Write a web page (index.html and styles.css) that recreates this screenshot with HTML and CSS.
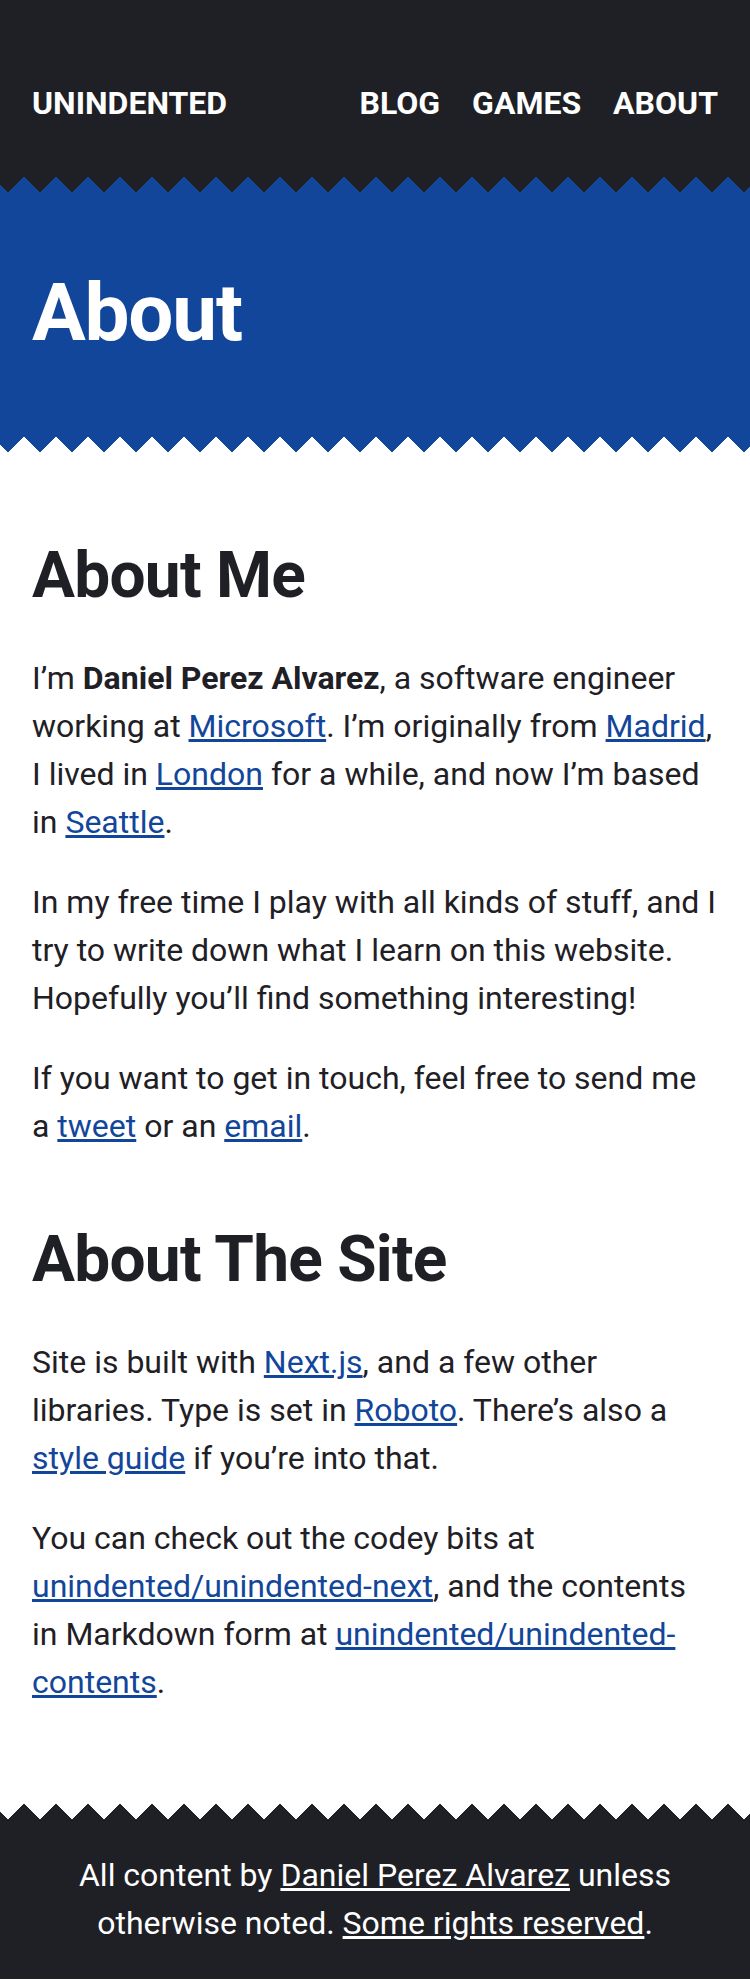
FILE: index.html
```html
<!DOCTYPE html>
<html lang="en">
<head>
<meta charset="utf-8">
<title>About - Unindented</title>
<link rel="stylesheet" href="styles.css">
</head>
<body>
<header class="site-header">
  <a class="logo" href="#">UNINDENTED</a>
  <nav class="nav">
    <a href="#">BLOG</a>
    <a href="#">GAMES</a>
    <a href="#">ABOUT</a>
  </nav>
</header>
<div class="zigzag zigzag-dark-blue"></div>
<section class="hero">
  <h1 class="hero-title">About</h1>
</section>
<div class="zigzag zigzag-blue-white"></div>
<main class="content">
  <h2 class="section-title">About Me</h2>
  <p>I’m <strong>Daniel Perez Alvarez</strong>, a software engineer working at <a href="#">Microsoft</a>. I’m originally from <a href="#">Madrid</a>, I lived in <a href="#">London</a> for a while, and now I’m based in <a href="#">Seattle</a>.</p>
  <p>In my free time I play with all kinds of stuff, and I try to write down what I learn on this website. Hopefully you’ll find something interesting!</p>
  <p>If you want to get in touch, feel free to send me a <a href="#">tweet</a> or an <a href="#">email</a>.</p>
  <h2 class="section-title section-title-next">About The Site</h2>
  <p>Site is built with <a href="#">Next.js</a>, and a few other libraries. Type is set in <a href="#">Roboto</a>. There’s also a <a href="#">style guide</a> if you’re into that.</p>
  <p>You can check out the codey bits at <a href="#">unindented/unindented-next</a>, and the contents in Markdown form at <a href="#">unindented/unindented-contents</a>.</p>
</main>
<div class="zigzag zigzag-white-dark"></div>
<footer class="site-footer">
  <p>All content by <a href="#">Daniel Perez Alvarez</a> unless otherwise noted. <a href="#">Some rights reserved</a>.</p>
</footer>
</body>
</html>
```
FILE: styles.css
```css
html, body {
  margin: 0;
  padding: 0;
}
body {
  font-family: Roboto, "Liberation Sans", sans-serif;
  color: #1f2025;
  background: #ffffff;
}

.site-header {
  background: #1f2025;
  display: flex;
  justify-content: space-between;
  align-items: flex-start;
  padding: 87px 32px 57px;
}
.logo, .nav a {
  color: #ffffff;
  text-decoration: none;
  font-weight: 700;
  font-size: 32px;
  line-height: 32px;
}
.nav {
  display: flex;
  gap: 32px;
}

.zigzag {
  height: 16px;
  background-size: 32px 16px;
  background-repeat: repeat-x;
  background-position: 24px 0;
}
.zigzag-dark-blue {
  background-color: #12469a;
  background-image: conic-gradient(from -45deg at 50% 100%, #1f2025 0deg 90deg, transparent 90deg 360deg);
}
.zigzag-blue-white {
  background-color: #ffffff;
  background-image: conic-gradient(from -45deg at 50% 100%, #12469a 0deg 90deg, transparent 90deg 360deg);
}
.zigzag-white-dark {
  background-color: #1f2025;
  background-image: conic-gradient(from -45deg at 50% 100%, #ffffff 0deg 90deg, transparent 90deg 360deg);
}

.hero {
  background: #12469a;
  padding: 79px 32px 81px;
}
.hero-title {
  margin: 0;
  color: #ffffff;
  font-size: 80px;
  line-height: 84px;
  font-weight: 700;
  letter-spacing: -0.015em;
}

.content {
  padding: 84px 32px 97px;
  font-size: 32px;
  line-height: 48px;
}
.section-title {
  margin: 0 0 38px;
  font-size: 64px;
  line-height: 80px;
  font-weight: 700;
  letter-spacing: -0.012em;
}
.section-title-next {
  margin-top: 70px;
}
.content p {
  margin: 0 0 32px;
}
.content p:last-child {
  margin-bottom: 0;
}
.content a {
  color: #12469a;
  text-decoration: underline;
}
.content strong {
  font-weight: 700;
}

.site-footer {
  background: #1f2025;
  color: #ffffff;
  text-align: center;
  padding: 32px 32px 32px;
  font-size: 32px;
  line-height: 48px;
}
.site-footer p {
  margin: 0;
}
.site-footer a {
  color: #ffffff;
  text-decoration: underline;
}
```
